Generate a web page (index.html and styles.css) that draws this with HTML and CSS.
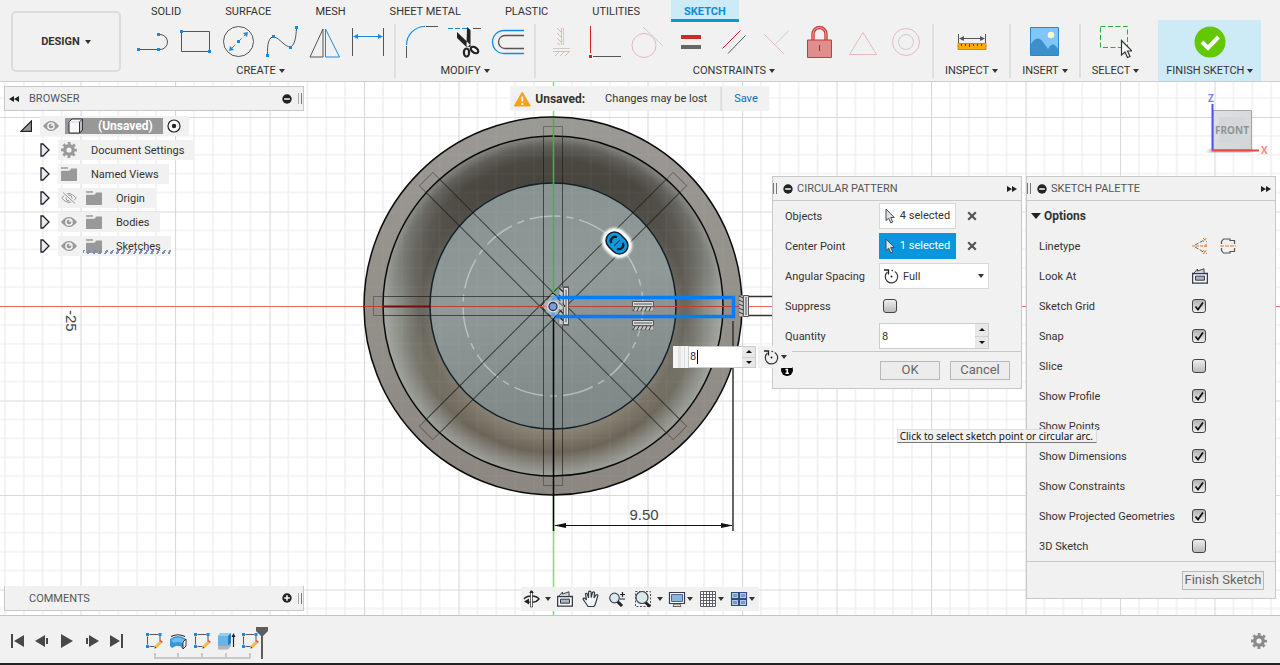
FILE: index.html
```html
<!DOCTYPE html>
<html lang="en">
<head>
<meta charset="utf-8">
<meta name="viewport" content="width=device-width, initial-scale=1">
<title>Sketch - (Unsaved)</title>
<link rel="stylesheet" href="styles.css">
</head>
<body>
<svg class="defs" aria-hidden="true">
  <symbol id="eye" viewBox="0 0 16 12"><path d="M0 6Q8-4 16 6Q8 16 0 6Z" fill="#999"/><circle cx="8" cy="6" r="3.1" fill="#999" stroke="#f0f0f0" stroke-width="1.500"/><circle cx="9" cy="5" r="1" fill="#f0f0f0"/></symbol>
  <symbol id="eye-off" viewBox="0 0 16 12"><path d="M.7 6Q8-3 15.300 6Q8 15 .7 6Z" fill="none" stroke="#999"/><circle cx="8" cy="6" r="3" fill="none" stroke="#999"/><path d="M2 .5l12 11" stroke="#f0f0f0" stroke-width="3"/><path d="M2 .5l12 11" stroke="#999"/></symbol>
  <symbol id="folder" viewBox="0 0 16 14"><path d="M0 3h8l2-1.500h6V14H0z" fill="#999"/><path d="M0 1h7" stroke="#999" stroke-width="1.500"/><path d="M0 3.500h8.500l1.500-1.500" stroke="#ddd" fill="none"/></symbol>
  <symbol id="gear" viewBox="0 0 16 16"><circle cx="8" cy="8" r="4.300" fill="none" stroke="currentColor" stroke-width="3.400"/><circle cx="8" cy="8" r="6.700" fill="none" stroke="currentColor" stroke-width="2.600" stroke-dasharray="2.800 2.462" stroke-dashoffset="1.400"/></symbol>
  <symbol id="twisty" viewBox="0 0 10 14"><path d="M1 1H3L9 7L3 13H1Z" fill="#e8ebf2" stroke="#222" stroke-width="1.300"/></symbol>
  <symbol id="minus" viewBox="0 0 10 10"><circle cx="5" cy="5" r="4.700" fill="#222"/><path d="M2.200 5h5.600" stroke="#fff" stroke-width="1.500"/></symbol>
  <symbol id="plus" viewBox="0 0 10 10"><circle cx="5" cy="5" r="4.700" fill="#222"/><path d="M2.200 5h5.600M5 2.200v5.600" stroke="#fff" stroke-width="1.500"/></symbol>
  <symbol id="ffwd" viewBox="0 0 10 6"><path d="M0 0L5 3L0 6ZM5 0L10 3L5 6Z" fill="#222"/></symbol>
  <symbol id="rewind" viewBox="0 0 10 6"><path d="M10 0L5 3L10 6ZM5 0L0 3L5 6Z" fill="#222"/></symbol>
  <symbol id="cursor" viewBox="0 0 10 16"><path d="M1 1V12.500L3.700 10.200L5.800 15L7.800 14L5.700 9.500H9.300Z" fill="#dfe3e8" stroke="#444b55"/></symbol>
  <symbol id="cross" viewBox="0 0 10 10"><path d="M1.200 1.200l7.600 7.600M8.800 1.200L1.200 8.800" stroke="#555" stroke-width="2.200"/></symbol>
  <symbol id="turn" viewBox="0 0 16 16"><path d="M4.500 4A6.200 6.200 0 1 0 11.800 3.500" fill="none" stroke="#333" stroke-width="1.200"/><path d="M10 2.700L8.500 2.400" stroke="#333" stroke-width="1.200"/><path d="M1 2H5.500V6.500" fill="none" stroke="#222" stroke-width="1.300"/><circle cx="8.500" cy="8.500" r="1" fill="#222"/></symbol>
  <symbol id="lookat" viewBox="1 1 16 16"><path d="M1.600 6.500h14.800v9.700h-14.800z" fill="#f7f8fa" stroke="#333b48" stroke-width="1.300"/><path d="M4.500 9.200h9v4h-9z" fill="#aab4c6" stroke="#333b48"/><path d="M3 6L6.500 2V4L13 1.800V6" fill="#ccd3de" stroke="#444"/></symbol>
  <symbol id="sketch-item" viewBox="0 0 18 18"><path d="M4.500 2.500h8.500M2.500 4.500v8M15 4v6M4.500 14.500h5" stroke="#555" fill="none"/><g fill="#178ae6"><path d="M1 1h3v3H1zM13.500 1h3v3h-3zM1 13h3v3H1z"/></g><path d="M9.500 16.500l.8-3.200 4.500-4.200 2 2-4.300 4.300z" fill="#f6b94d"/><path d="M9.500 16.500l.5-2 1.500 1.400z" fill="#333"/><path d="M14.800 9.100l1-1 2 2-1 1z" fill="#e04a3a"/></symbol>
</svg>

<header class="toolbar">
  <button class="workspace" type="button">DESIGN<span class="caret"></span></button>
  <div class="ribbon">
    <nav class="tabs" aria-label="Toolbar tabs">
      <a href="#solid">SOLID</a><a href="#surface">SURFACE</a><a href="#mesh">MESH</a><a href="#sheet">SHEET METAL</a><a href="#plastic">PLASTIC</a><a href="#utilities">UTILITIES</a><a class="active" href="#sketch" aria-current="page">SKETCH</a>
    </nav>
    <div class="groups">
      <section class="group">
        <div class="tools">
          <button type="button" aria-label="Line"><svg viewBox="136 26 34 34"><path d="M139 50.500H158M160 35.500A7.500 7.500 0 0 1 160 50.500" fill="none" stroke="#555"/><path d="M137 49h3v3h-3zM157 49h3v3h-3zM157 34h3v3h-3z" fill="#178ae6"/></svg></button>
          <button type="button" aria-label="Rectangle"><svg viewBox="179 26 34 34"><path d="M181.500 32.500h28v20h-28z" fill="none" stroke="#555"/><path d="M180 31h3v3h-3zM208 51h3v3h-3z" fill="#178ae6"/></svg></button>
          <button type="button" aria-label="Circle"><svg viewBox="222 26 34 34"><circle cx="238.500" cy="42.500" r="15" fill="none" stroke="#555"/><path d="M231 50l15.500-15.500" stroke="#178ae6" stroke-dasharray="6 3"/><path d="M248 33l-1 5-4-4zM229 52l1-5 4 4zM237 41h3v3h-3z" fill="#178ae6"/></svg></button>
          <button type="button" aria-label="Spline"><svg viewBox="265 26 34 34"><path d="M267.500 57C267 45 269 37 274 38C280 39 284 48 291 48C295 45 296 38 296.500 29" fill="none" stroke="#555"/><path d="M266 55h3v3h-3zM272 36h3v3h-3zM289 47h3v3h-3zM295 27h3v3h-3z" fill="#178ae6"/></svg></button>
          <button type="button" aria-label="Mirror"><svg viewBox="308 26 34 34"><path d="M323 30v28h-13z" fill="none" stroke="#555"/><path d="M325.500 30v28h14z" fill="none" stroke="#178ae6"/></svg></button>
          <button type="button" aria-label="Sketch Dimension"><svg viewBox="351 26 34 34"><path d="M352.500 29v28M383.500 29v28" stroke="#555"/><path d="M355 37.500h26" stroke="#178ae6"/><path d="M353 37.500l5-2.500v5zM383 37.500l-5-2.500v5z" fill="#178ae6"/></svg></button>
        </div>
        <button class="group-label" type="button">CREATE<span class="caret"></span></button>
      </section>
      <section class="group">
        <div class="tools">
          <button type="button" aria-label="Fillet"><svg viewBox="405 26 34 34"><path d="M406.500 46A18.500 18.500 0 0 1 425 27.500" fill="none" stroke="#178ae6" stroke-width="1.200"/><path d="M406.500 47v12M426 27.500h12" stroke="#555"/></svg></button>
          <button type="button" aria-label="Trim"><svg viewBox="448 26 34 34"><path d="M448 29.500h19" stroke="#178ae6" stroke-dasharray="5 2"/><path d="M473 29.500h8" stroke="#555"/><path d="M467 28l3.500 3V48l-4-.5zM457 33v6l10 9.500 3-3z" fill="#222"/><ellipse cx="466.500" cy="53.500" rx="2.600" ry="4" fill="none" stroke="#222" stroke-width="2.200"/><ellipse cx="474.500" cy="51" rx="4.200" ry="2.600" transform="rotate(35 474.500 51)" fill="none" stroke="#222" stroke-width="2.200"/></svg></button>
          <button type="button" aria-label="Offset"><svg viewBox="491 26 34 34"><path d="M524 31.500H504A11.500 11.500 0 0 0 504 54.500H524" fill="none" stroke="#178ae6" stroke-width="1.300"/><path d="M524 36.500H505A6.500 6.500 0 0 0 505 49.500H524" fill="none" stroke="#555" stroke-width="1.300"/></svg></button>
        </div>
        <button class="group-label" type="button">MODIFY<span class="caret"></span></button>
      </section>
      <section class="group">
        <div class="tools">
          <button type="button" aria-label="Horizontal/Vertical"><svg viewBox="545 26 34 34"><g fill="none" stroke="#eab5b5"><path d="M561.500 29v17M557 29l4 4M557 34l4 4M557 39l4 4M557 44l3 2M553 52.500h17M559 53l-4 4M564 53l-4 4M569 53l-4 4"/><path d="M563.500 29v17M553 49.500h17" stroke="#ccc"/></g></svg></button>
          <button type="button" aria-label="Coincident"><svg viewBox="588 26 34 34"><path d="M590.500 27v27" stroke="#d02020"/><path d="M593 57.500h28" stroke="#555"/><path d="M589 56h3v3h-3z" fill="#d02020"/></svg></button>
          <button type="button" aria-label="Tangent"><svg viewBox="631 26 34 34"><circle cx="644" cy="46.500" r="12" fill="none" stroke="#e9b8b8"/><path d="M643 28l20 19" stroke="#ccc"/></svg></button>
          <button type="button" aria-label="Equal"><svg viewBox="674 26 34 34"><path d="M681 36h20v4h-20z" fill="#d02727"/><path d="M681 46h20v4h-20z" fill="#666"/></svg></button>
          <button type="button" aria-label="Parallel"><svg viewBox="717 26 34 34"><path d="M722.500 49.500l18-18" stroke="#d02020"/><path d="M728 54.500l17.500-18" stroke="#555"/></svg></button>
          <button type="button" aria-label="Perpendicular"><svg viewBox="760 26 34 34"><path d="M764 35l20 20" stroke="#e9b8b8"/><path d="M775 45.500l14-14" stroke="#ccc"/></svg></button>
          <button type="button" aria-label="Fix/Unfix"><svg viewBox="803 26 34 34"><path d="M813 41v-6a6.500 6.500 0 0 1 13 0v6" fill="none" stroke="#cf4444" stroke-width="3.500"/><path d="M813 41v-6a6.500 6.500 0 0 1 13 0v6" fill="none" stroke="#e8a0a0" stroke-width="1"/><path d="M807.500 41h24v17.500h-24z" fill="#e08d8d" stroke="#cc3838"/><path d="M819.500 46v6" stroke="#b52020"/></svg></button>
          <button type="button" aria-label="Midpoint"><svg viewBox="846 26 34 34"><path d="M863 33.500l13.500 22h-27z" fill="none" stroke="#e9b8b8"/></svg></button>
          <button type="button" aria-label="Concentric"><svg viewBox="889 26 34 34"><circle cx="906" cy="43" r="13.500" fill="none" stroke="#e9b8b8"/><circle cx="906" cy="43" r="7.500" fill="none" stroke="#ccc"/></svg></button>
        </div>
        <button class="group-label" type="button">CONSTRAINTS<span class="caret"></span></button>
      </section>
      <section class="group single">
        <div class="tools"><button type="button" aria-label="Measure"><svg viewBox="955 26 34 34"><path d="M958 44.500h28v6h-28z" fill="#ffab10" stroke="#d98600"/><path d="M961.500 45v2M965.500 45v2M969.500 45v3M973.500 45v2M977.500 45v2M981.500 45v2" stroke="#444"/><path d="M958.500 35v9M985.500 35v9M960 39.500h24" stroke="#555"/><path d="M959 39.500l5-2.500v5zM985 39.500l-5-2.500v5z" fill="#555"/></svg></button></div>
        <button class="group-label" type="button">INSPECT<span class="caret"></span></button>
      </section>
      <section class="group single">
        <div class="tools"><button type="button" aria-label="Insert image"><svg viewBox="1029 26 34 34"><path d="M1031.500 28.500h28v28h-28z" fill="#80c6fa" stroke="#2f86c4"/><path d="M1032 56V45C1036 38 1041 38 1044 43L1049 50C1052 44 1056 44 1059 50V56Z" fill="#3e90cb"/><circle cx="1052" cy="36" r="3.300" fill="#fdfbd0"/></svg></button></div>
        <button class="group-label" type="button">INSERT<span class="caret"></span></button>
      </section>
      <section class="group single last">
        <div class="tools"><button type="button" aria-label="Select"><svg viewBox="1100 26 34 34"><path d="M1102.500 27.500h27v21h-27z" fill="none" stroke="#1eb04c" stroke-dasharray="5 2.500"/><path d="M1123.500 41.500v14.500l3.500-3 2.500 5.500 2.500-1-2.500-5.500h4.500z" fill="#fff" stroke="#333" stroke-width="1.200"/></svg></button></div>
        <button class="group-label" type="button">SELECT<span class="caret"></span></button>
      </section>
      <section class="group finish">
        <div class="tools"><button type="button" aria-label="Finish"><svg viewBox="1192 26 34 34"><circle cx="1209" cy="43" r="15.500" fill="#63c800"/><path d="M1201 43l6 6 10.500-11" fill="none" stroke="#fff" stroke-width="4"/></svg></button></div>
        <button class="group-label" type="button">FINISH SKETCH<span class="caret"></span></button>
      </section>
    </div>
  </div>
</header>

<main class="viewport">
  <svg class="scene" viewBox="0 82 1280 533" preserveAspectRatio="xMidYMid slice" role="img" aria-label="Circular pattern preview on a round bowl">
    <defs>
      <pattern id="grid" x="80.500" y="22.500" width="94.500" height="94.500" patternUnits="userSpaceOnUse">
        <path d="M18.900 0V94.500M37.800 0V94.500M56.700 0V94.500M75.600 0V94.500M0 18.900H94.500M0 37.800H94.500M0 56.700H94.500M0 75.600H94.500" stroke="#ebebeb" stroke-width="1.200"/>
        <path d="M.5 0V94.500M0 .5H94.500" stroke="#d9d9d9" stroke-width="1.200"/>
      </pattern>
      <linearGradient id="rim" x1="0" y1="0" x2="0" y2="1"><stop offset="0" stop-color="#9b9994"/><stop offset="1" stop-color="#8c8780"/></linearGradient>
      <radialGradient id="wall" gradientUnits="userSpaceOnUse" cx="553" cy="306" r="170"><stop offset=".7" stop-color="#938b7e"/><stop offset=".78" stop-color="#807869"/><stop offset=".86" stop-color="#6b6458"/><stop offset=".94" stop-color="#8a8981"/><stop offset="1" stop-color="#9da19a"/></radialGradient>
      <radialGradient id="sides" gradientUnits="userSpaceOnUse" cx="553" cy="306" r="170"><stop offset=".7" stop-color="#77746b"/><stop offset=".78" stop-color="#68655c"/><stop offset=".88" stop-color="#858880"/><stop offset="1" stop-color="#a5aaa4"/></radialGradient>
      <radialGradient id="shade" gradientUnits="userSpaceOnUse" cx="553" cy="306" r="170"><stop offset=".7" stop-color="#48443e"/><stop offset=".86" stop-color="#4b4741"/><stop offset=".94" stop-color="#5f5e58"/><stop offset="1" stop-color="#85867f"/></radialGradient>
      <linearGradient id="fadeTop" gradientUnits="userSpaceOnUse" x1="0" y1="136" x2="0" y2="306"><stop offset=".3" stop-color="#fff"/><stop offset=".55" stop-color="#aaa"/><stop offset=".8" stop-color="#555"/><stop offset="1" stop-color="#000"/></linearGradient>
      <linearGradient id="fadeSide" gradientUnits="userSpaceOnUse" x1="0" y1="206" x2="0" y2="430"><stop offset="0" stop-color="#fff"/><stop offset=".5" stop-color="#fff"/><stop offset="1" stop-color="#000"/></linearGradient>
      <mask id="topMask"><path d="M380 130h350v350H380z" fill="url(#fadeTop)"/></mask>
      <mask id="sideMask"><path d="M380 130h350v350H380z" fill="url(#fadeSide)"/></mask>
      <linearGradient id="floor" x1="0" y1="0" x2=".2" y2="1"><stop offset="0" stop-color="#879290"/><stop offset=".5" stop-color="#8f9997"/><stop offset="1" stop-color="#7f8987"/></linearGradient>
      <clipPath id="inside"><circle cx="553" cy="306" r="170"/></clipPath>
      <clipPath id="body"><circle cx="553" cy="306" r="189"/></clipPath>
      <filter id="glow" x="-50%" y="-50%" width="200%" height="200%"><feGaussianBlur stdDeviation="1"/></filter>
      <g id="arms"><path d="M543.500 126.500h19v359h-19z"/><path d="M543.500 126.500h19v359h-19z" transform="rotate(45 553 306)"/><path d="M543.500 126.500h19v359h-19z" transform="rotate(-45 553 306)"/><path d="M553 296.500H373.500v19H553"/></g>
      <g id="lock"><path d="M-10.500-5.500h21v5h-21z" fill="#ddd" stroke="#555"/><path d="M-9-3h18" stroke="#555"/><path d="M-10.500 0h21v4h-21z" fill="#c3c8c6" stroke="#777" stroke-width=".6"/><path d="M-8 0l-2 4M-4 0l-2 4M0 0l-2 4M4 0l-2 4M8 0l-2 4" stroke="#333"/></g>
    </defs>
    <path d="M0 82h1280v533H0z" fill="#fff"/>
    <path d="M0 82h1280v533H0z" fill="url(#grid)"/>
    <path d="M0 306.500h1280" stroke="#e56b6b"/>
    <path d="M553.500 82v533" stroke="#6bea6b" stroke-width="1.500"/>
    <circle cx="553" cy="306" r="189" fill="url(#rim)"/>
    <circle cx="553" cy="306" r="170" fill="url(#wall)"/>
    <circle cx="553" cy="306" r="170" fill="url(#sides)" mask="url(#sideMask)"/>
    <circle cx="553" cy="306" r="170" fill="url(#shade)" mask="url(#topMask)"/>
    <circle cx="553" cy="306" r="123" fill="url(#floor)"/>
    <g clip-path="url(#body)"><path d="M360 110h390v390H360z" fill="url(#grid)" opacity=".05"/></g>
    <g fill="none" stroke="#0b0b0b" stroke-width="1.500"><circle cx="553" cy="306" r="189"/><circle cx="553" cy="306" r="170"/><circle cx="553" cy="306" r="123" stroke="#13232b"/></g>
    <circle cx="553" cy="306" r="90" fill="none" stroke="#fff" stroke-opacity=".4" stroke-width="1.500" stroke-dasharray="31 6 7 6"/>
    <use href="#arms" fill="none" stroke="#222" stroke-opacity=".4"/>
    <g clip-path="url(#inside)"><use href="#arms" fill="none" stroke="#111" stroke-opacity=".4"/></g>
    <path d="M364 306.500h378" stroke="#c23b3b"/>
    <path d="M383 306.500h48" stroke="#780b10" stroke-width="2"/>
    <path d="M553.500 118v188" stroke="#2cc42c" stroke-width="1.500"/>
    <path d="M553.500 316v215" stroke="#000" stroke-width="1.500"/>
    <path d="M742 296.500h40M742 315.500h40" stroke="#333" stroke-width="1.500"/>
    <path d="M733 321v210" stroke="#333" stroke-width="1.500"/>
    <path d="M555 525.500h177" stroke="#111"/>
    <path d="M554 525.500l12-2.500v5zM733 525.500l-12-2.500v5z" fill="#111"/>
    <use href="#lock" transform="translate(563 306) rotate(90) scale(1.800 1)"/>
    <use href="#lock" transform="translate(643 307)"/>
    <use href="#lock" transform="translate(643 326)"/>
    <use href="#lock" transform="translate(743 306) rotate(90)"/>
    <path d="M553 297.500H733.500V316.500H553" fill="none" stroke="#087cf8" stroke-width="3.500"/>
    <path d="M541 306l12-13 12 13-12 13z" fill="#d8dee0" fill-opacity=".4" stroke="#222" stroke-dasharray="5 3"/>
    <path d="M553 298v18" stroke="#50a0f4" stroke-width="3"/>
    <circle cx="553" cy="306.500" r="6" fill="#ddd"/>
    <circle cx="553" cy="306.500" r="4" fill="#7f9ddd" stroke="#25334a" stroke-width="1.300"/>
    <g transform="translate(617 243) rotate(45)"><rect x="-16" y="-13" width="32" height="26" rx="13" fill="#fff" filter="url(#glow)"/><rect x="-12" y="-8.500" width="24" height="17" rx="8.500" fill="#0f9ade" stroke="#14232d" stroke-width="1.600"/><path d="M-4-4C-8-3-8 3-4 4M4-4C8-3 8 3 4 4" fill="none" stroke="#0d2330" stroke-width="2.400"/><path d="M0-4v8" stroke="#063c5a"/></g>
    <g class="scene-text"><text x="644" y="520" text-anchor="middle">9.50</text><text transform="translate(66 310) rotate(90)">-25</text></g>
  </svg>

  <aside class="browser">
    <div class="bar"><button type="button" aria-label="Collapse"><svg class="i10x6"><use href="#rewind"/></svg></button><h2>BROWSER</h2><button type="button" aria-label="Hide"><svg class="i10"><use href="#minus"/></svg></button><span class="grip"></span></div>
    <ul class="tree">
      <li class="root"><button type="button" aria-label="Collapse"><svg width="12" height="12" viewBox="0 0 12 12"><path d="M11.400 1v10.400H1z" fill="#999" stroke="#222" stroke-width="1.200"/></svg></button>
        <div class="node"><svg class="i-eye"><use href="#eye"/></svg><span class="name"><svg width="16" height="16" viewBox="0 0 16 16"><path d="M1 4L4 1H14.500V12L11.500 15H1Z" fill="#f5f7fa" stroke="#333"/><path d="M1.500 4H11.500V15" fill="none" stroke="#cfd6de"/><path d="M11.500 4L14.500 1V12L11.500 15Z" fill="#b9c0c9" stroke="#333"/></svg>(Unsaved)</span><svg width="14" height="14" viewBox="0 0 14 14"><circle cx="7" cy="7" r="6" fill="#fff" stroke="#222" stroke-width="1.200"/><circle cx="7" cy="7" r="2.200" fill="#222"/></svg></div></li>
      <li><button type="button" aria-label="Expand"><svg class="i-tw"><use href="#twisty"/></svg></button><div class="node"><svg class="i16 grey"><use href="#gear"/></svg><span class="label">Document Settings</span></div></li>
      <li><button type="button" aria-label="Expand"><svg class="i-tw"><use href="#twisty"/></svg></button><div class="node"><svg class="i-fold"><use href="#folder"/></svg><span class="label">Named Views</span></div></li>
      <li><button type="button" aria-label="Expand"><svg class="i-tw"><use href="#twisty"/></svg></button><div class="node"><svg class="i-eye"><use href="#eye-off"/></svg><svg class="i-fold"><use href="#folder"/></svg><span class="label">Origin</span></div></li>
      <li><button type="button" aria-label="Expand"><svg class="i-tw"><use href="#twisty"/></svg></button><div class="node"><svg class="i-eye"><use href="#eye"/></svg><svg class="i-fold"><use href="#folder"/></svg><span class="label">Bodies</span></div></li>
      <li><button type="button" aria-label="Expand"><svg class="i-tw"><use href="#twisty"/></svg></button><div class="node editing"><svg class="i-eye"><use href="#eye"/></svg><svg class="i-fold"><use href="#folder"/></svg><span class="label">Sketches</span></div></li>
    </ul>
  </aside>

  <div class="notice"><svg width="18" height="16" viewBox="0 0 18 16"><path d="M9 1L17 15H1Z" fill="#fba01c" stroke="#fba01c" stroke-linejoin="round"/><path d="M9 5.500v5M9 12v2" stroke="#fff" stroke-width="1.800"/></svg><strong>Unsaved:</strong><span>Changes may be lost</span><a href="#save">Save</a></div>

  <svg class="viewcube" viewBox="1200 90 72 68" role="img" aria-label="View cube, front">
    <defs><linearGradient id="face" x1="0" y1="0" x2="1" y2="1"><stop offset="0" stop-color="#dfe1e3"/><stop offset="1" stop-color="#d2d3d4"/></linearGradient><filter id="soft"><feGaussianBlur stdDeviation="1.500"/></filter></defs>
    <path d="M1206 152h44l3-3h-40z" fill="#999" filter="url(#soft)"/>
    <path d="M1213 110.500h38.500v39H1213z" fill="url(#face)" stroke="#a5a5a5"/>
    <path d="M1219 117h26v26h-26z" fill="#d3d7da"/>
    <path d="M1212.500 104v47" stroke="#5050f0" stroke-width="2"/><path d="M1212 150.500h47" stroke="#f04444" stroke-width="2"/>
    <text x="1232" y="134" text-anchor="middle" class="face">FRONT</text><text x="1208" y="102" class="axis z">Z</text><text x="1261" y="154" class="axis x">X</text>
  </svg>

  <form class="panel pattern" onsubmit="return false">
    <div class="panel-head"><span class="grip"></span><svg class="i10"><use href="#minus"/></svg><h2>CIRCULAR PATTERN</h2><svg class="i10x6"><use href="#ffwd"/></svg></div>
    <div class="fields">
      <div class="field"><span class="lbl">Objects</span><button class="pick" type="button"><svg class="i-cur"><use href="#cursor"/></svg>4 selected</button><button class="clear" type="button" aria-label="Clear objects"><svg class="i10"><use href="#cross"/></svg></button></div>
      <div class="field"><span class="lbl">Center Point</span><button class="pick on" type="button"><svg class="i-cur"><use href="#cursor"/></svg>1 selected</button><button class="clear" type="button" aria-label="Clear center point"><svg class="i10"><use href="#cross"/></svg></button></div>
      <div class="field"><label class="lbl" for="spacing">Angular Spacing</label><span class="combo"><svg class="i16"><use href="#turn"/></svg><select id="spacing"><option>Full</option><option>Angle</option></select><span class="caret"></span></span></div>
      <div class="field"><label class="lbl" for="suppress">Suppress</label><input class="check indent" id="suppress" type="checkbox"></div>
      <div class="field"><label class="lbl" for="qty">Quantity</label><span class="number"><input id="qty" type="text" inputmode="numeric" value="8"><span class="spin"><button type="button" aria-label="Increase"></button><button type="button" aria-label="Decrease"></button></span></span></div>
    </div>
    <div class="panel-foot"><svg class="info" viewBox="0 0 12 12"><circle cx="6" cy="6" r="6" fill="#000"/><path d="M6 2v2M4.500 5.500H6.300V9M4.500 9.200h3.300" stroke="#fff" stroke-width="1.500" fill="none"/></svg><button class="btn" type="button">OK</button><button class="btn" type="button">Cancel</button></div>
  </form>

  <form class="panel palette" onsubmit="return false">
    <div class="panel-head"><span class="grip"></span><svg class="i10"><use href="#minus"/></svg><h2>SKETCH PALETTE</h2><svg class="i10x6"><use href="#ffwd"/></svg></div>
    <div class="fields">
      <h3 class="field"><span class="fold"></span>Options</h3>
      <div class="field"><span class="lbl">Linetype</span><button type="button" aria-label="Construction"><svg class="i16" viewBox="0 0 16 16"><path d="M3 7L13 1.500M3 9L13 15" stroke="#666" stroke-dasharray="4 1.500"/><path d="M0 8h16M11 0l4 4M14.500 0L11 4M14 6v4M11 12l4 4M14.500 12L11 16" stroke="#e8792b" stroke-dasharray="3 1"/></svg></button><button class="second" type="button" aria-label="Centerline"><svg class="i16" viewBox="0 0 16 16"><path d="M1.500 6V3.500L3.500 1H10V2.500H14.500V6M1.500 10V12.500L3.500 15H10V13.500H14.500V10" fill="none" stroke="#555" stroke-width="1.200"/><path d="M0 8h16" stroke="#e8792b" stroke-width="1.200" stroke-dasharray="4 1"/></svg></button></div>
      <div class="field"><span class="lbl">Look At</span><button type="button" aria-label="Look At"><svg class="i16"><use href="#lookat"/></svg></button></div>
      <div class="field"><label class="lbl" for="o1">Sketch Grid</label><input class="check" id="o1" type="checkbox" checked></div>
      <div class="field"><label class="lbl" for="o2">Snap</label><input class="check" id="o2" type="checkbox" checked></div>
      <div class="field"><label class="lbl" for="o3">Slice</label><input class="check" id="o3" type="checkbox"></div>
      <div class="field"><label class="lbl" for="o4">Show Profile</label><input class="check" id="o4" type="checkbox" checked></div>
      <div class="field"><label class="lbl" for="o5">Show Points</label><input class="check" id="o5" type="checkbox" checked></div>
      <div class="field"><label class="lbl" for="o6">Show Dimensions</label><input class="check" id="o6" type="checkbox" checked></div>
      <div class="field"><label class="lbl" for="o7">Show Constraints</label><input class="check" id="o7" type="checkbox" checked></div>
      <div class="field"><label class="lbl" for="o8">Show Projected Geometries</label><input class="check" id="o8" type="checkbox" checked></div>
      <div class="field"><label class="lbl" for="o9">3D Sketch</label><input class="check" id="o9" type="checkbox"></div>
    </div>
    <div class="panel-foot"><button class="btn wide" type="button">Finish Sketch</button></div>
  </form>

  <div class="inline-edit"><span class="handle"></span><span class="number"><input type="text" inputmode="numeric" value="8" aria-label="Quantity"><i class="text-caret"></i><span class="spin"><button type="button" aria-label="Increase"></button><button type="button" aria-label="Decrease"></button></span></span><button class="turn" type="button" aria-label="Spacing type"><svg class="i16"><use href="#turn"/></svg><span class="caret"></span></button></div>
  <div class="tooltip" role="tooltip">Click to select sketch point or circular arc.</div>

  <div class="bar comments"><h2>COMMENTS</h2><button type="button" aria-label="Add comment"><svg class="i10"><use href="#plus"/></svg></button><span class="grip"></span></div>

  <div class="navbar" role="toolbar" aria-label="Navigation">
    <button class="orbit" type="button" aria-label="Orbit"><svg width="17" height="18" viewBox="0 0 17 18"><path d="M1 9C4 5 13 5 16 9C13 13 6 13 3 11" fill="none" stroke="#222" stroke-width="1.300"/><path d="M7.500 1h2v16h-2z" fill="#fff" stroke="#444" stroke-width=".8"/><path d="M1 11.500l5-3v6zM6 3l2.500-2.500L11 3" fill="#222"/></svg><span class="caret"></span></button>
    <button type="button" aria-label="Look at"><svg width="18" height="18" viewBox="0 0 18 18"><use href="#lookat" x="1" y="1" width="16" height="16"/></svg></button>
    <button type="button" aria-label="Pan"><svg width="18" height="18" viewBox="0 0 18 18"><path d="M6 16.500C4 13 2 11 1 9C1.500 7.500 3 8 4.500 10L3.500 4C4.500 2.500 5.500 3 6.500 8L6.500 2C7.500 .5 8.800 1 9 2L9.200 7.500L10.500 2.500C11.500 1.500 13 2 12.500 3.500L12 8L14 5C15.500 4 16.500 5 15.500 7C14 11 14 14 12 16.500Z" fill="#f5f7fa" stroke="#333a44" stroke-width="1.200"/></svg></button>
    <button type="button" aria-label="Zoom"><svg width="18" height="18" viewBox="0 0 18 18"><path d="M9 11l5 5" stroke="#222" stroke-width="3"/><circle cx="6.500" cy="8" r="4.800" fill="#d8eaf0" stroke="#445" stroke-width="1.200"/><path d="M12 4.500h5M14.500 2v5M12 9h5" stroke="#222" stroke-width="1.200"/></svg></button>
    <button type="button" aria-label="Fit"><svg width="18" height="18" viewBox="0 0 18 18"><path d="M1.500 1.500h15v15h-15z" fill="none" stroke="#555" stroke-dasharray="2 1.500"/><path d="M11 12l5 4.500" stroke="#222" stroke-width="3"/><circle cx="8" cy="7.500" r="6" fill="#d8eaea" stroke="#445" stroke-width="1.200"/></svg><span class="caret"></span></button>
    <button class="tight" type="button" aria-label="Display settings"><svg width="18" height="18" viewBox="0 0 18 18"><path d="M1.500 2.500h15v11h-15z" fill="#fff" stroke="#333b48" stroke-width="1.200"/><path d="M3.500 4.500h11v7h-11z" fill="#8eb4e2" stroke="#47648e"/><path d="M6 14h6l1 2.500H5z" fill="#ddd" stroke="#444" stroke-width=".8"/></svg><span class="caret"></span></button>
    <button class="tight" type="button" aria-label="Grid and snaps"><svg width="18" height="18" viewBox="0 0 18 18"><path d="M1.500 1.500h15v15h-15zM4.500 1.500v15M7.500 1.500v15M10.500 1.500v15M13.500 1.500v15M1.500 4.500h15M1.500 7.500h15M1.500 10.500h15M1.500 13.500h15" fill="#fff" stroke="#5a5f68"/></svg><span class="caret"></span></button>
    <button class="tight" type="button" aria-label="Viewports"><svg width="18" height="18" viewBox="0 0 18 18"><path d="M1.500 2.500h7v6h-7zM9.500 2.500h7v6h-7zM1.500 9.500h7v6h-7zM9.500 9.500h7v6h-7z" fill="#b6cdee" stroke="#2f4a7c" stroke-width="1.100"/><path d="M3.500 4.500h3v2h-3zM11.500 4.500h3v2h-3zM3.500 11.500h3v2h-3zM11.500 11.500h3v2h-3z" fill="#7ea2d8" stroke="#5f82b8" stroke-width=".7"/></svg><span class="caret"></span></button>
  </div>
</main>

<footer class="timeline">
  <div class="playback">
    <button type="button" aria-label="Go to start"><svg viewBox="0 0 16 16"><path d="M2 1v14h2V1zM15 2v12L5 8z"/></svg></button>
    <button type="button" aria-label="Step back"><svg viewBox="0 0 16 16"><path d="M11 2v12L1 8zM12 5h2v6h-2z"/></svg></button>
    <button type="button" aria-label="Play"><svg viewBox="0 0 16 16"><path d="M2 1v14l12-7z"/></svg></button>
    <button type="button" aria-label="Step forward"><svg viewBox="0 0 16 16"><path d="M5 2v12l10-6zM2 5h2v6H2z"/></svg></button>
    <button type="button" aria-label="Go to end"><svg viewBox="0 0 16 16"><path d="M12 1v14h2V1zM1 2v12l10-6z"/></svg></button>
  </div>
  <div class="features">
    <button type="button" aria-label="Sketch1"><svg width="24" height="46" viewBox="0 0 24 46"><use href="#sketch-item" x="3" y="14" width="18" height="18"/><path class="track" d="M13 35v5H24"/></svg></button>
    <button type="button" aria-label="Revolve1"><svg width="24" height="46" viewBox="0 0 24 46"><path d="M4 21Q12 15 20 21V28L17 31L14 28H10L6 30L4 28Z" fill="#3a96d8"/><path d="M5 22Q12 17 19 22L16 25Q12 23 8 25Z" fill="#74bcf0"/><path d="M17 24l3-3v7l-3 3z" fill="#fff" stroke="#333"/><path d="M5 18.500Q12 15 19 18.500" fill="none" stroke="#333" stroke-width="1.200"/><path class="track" d="M0 40H24M12 35v5"/></svg></button>
    <button type="button" aria-label="Sketch2"><svg width="24" height="46" viewBox="0 0 24 46"><use href="#sketch-item" x="3" y="14" width="18" height="18"/><path class="track" d="M0 40H24M12 35v5"/></svg></button>
    <button type="button" aria-label="Extrude1"><svg width="24" height="46" viewBox="0 0 24 46"><path d="M4 28h10l3-3v3l-3 3.500H4z" fill="#b5b5b5"/><path d="M4 18l3-3h10v10l-3 3H4z" fill="#1f7fc4"/><path d="M4 18h10v10H4z" fill="#69b5ea"/><path d="M4 18l3-3h10l-3 3z" fill="#8fd0f8"/><path d="M19.500 17v12" stroke="#222" stroke-width="1.200"/><path d="M19.500 15l-2 4h4z" fill="#222"/><path class="track" d="M0 40H24M12 35v5"/></svg></button>
    <button type="button" aria-label="Sketch3, current"><svg width="36" height="46" viewBox="0 0 36 46"><use href="#sketch-item" x="3" y="14" width="18" height="18"/><path class="track" d="M0 40H12V35"/><path d="M18 9h12v4l-5 5V41h-2V18l-5-5z" fill="#5d5d5d"/></svg></button>
  </div>
  <button class="settings" type="button" aria-label="Timeline settings"><svg class="i16"><use href="#gear"/></svg></button>
</footer>
</body>
</html>
```
FILE: styles.css
```css
* { box-sizing: border-box; }
body {
  margin: 0;
  min-height: 100vh;
  display: flex;
  flex-direction: column;
  font: 11px/14px Roboto, "Liberation Sans", sans-serif;
  color: #333;
  background: #f1f1f1;
}
button, input, select { font: inherit; color: inherit; margin: 0; }
button { padding: 0; border: 0; background: none; display: flex; align-items: center; justify-content: center; white-space: nowrap; }
h2, h3, ul { margin: 0; padding: 0; font: inherit; list-style: none; }
a { color: inherit; text-decoration: none; }
svg { display: block; flex: none; }
.defs { position: absolute; width: 0; height: 0; }
.caret { flex: none; border: 3px solid transparent; border-top: 4px solid #333; border-bottom: 0; margin-left: 5px; }
.i10 { width: 10px; height: 10px; }
.i10x6 { width: 10px; height: 6px; }
.i16 { width: 16px; height: 16px; }
.i-eye { width: 16px; height: 12px; }
.i-fold { width: 16px; height: 14px; }
.i-tw { width: 10px; height: 14px; }
.i-cur { width: 10px; height: 16px; }
.grey { color: #999; }
.grip { width: 4px; height: 11px; border: solid #777; border-width: 0 1px; }

/* Toolbar */
.toolbar { display: flex; gap: 6px; height: 82px; border-bottom: 1px solid #ccc; }
.workspace { width: 110px; height: 61px; margin: 11px 0 0 11px; border: 2px solid #dcdcdc; border-radius: 5px; font-weight: 700; }
.ribbon { flex: 1; display: flex; flex-direction: column; min-width: 0; }
.tabs { display: flex; height: 24px; padding-left: 2px; }
.tabs a { margin: 0 9px; padding: 5px 13px 0; white-space: nowrap; }
.tabs .active { background: #cdeaf7; border-bottom: 3px solid #0a96dc; color: #0a8fd0; font-weight: 700; }
.groups { display: flex; flex: 1; }
.group { margin: 2px 0 3px; padding: 1px 9px 0; border-right: 2px solid #dfdfdf; display: flex; flex-direction: column; align-items: center; }
.tools { display: flex; gap: 9px; }
.tools svg { width: 34px; height: 34px; }
.group-label { margin-top: 5px; height: 14px; }
.group-label .caret { margin-left: 3px; }
.single { padding: 1px 11px 0; }
.last { border-right-color: transparent; }
.finish { margin: -2px 0 0 6px; padding: 5px 8px 0; background: #cdeaf7; border: 0; }

/* Canvas */
.viewport { position: relative; flex: 1; min-height: 533px; overflow: hidden; }
.scene { position: absolute; inset: 0; width: 100%; height: 100%; }
.scene-text { font: 15px "Liberation Sans", Arial, sans-serif; fill: #444; }
.bar { display: flex; align-items: center; height: 25px; padding: 0 1px 0 4px; width: 300px; background: #f1f1f1; border: 1px solid #c8c8c8; color: #555; }
.bar h2 { flex: 1; margin-left: 10px; }
.bar .grip { margin-left: 6px; border-left-color: #aaa; }
.browser { position: absolute; top: 4px; left: 4px; }
.tree { display: flex; flex-direction: column; gap: 4px; padding: 5px 0 0 36px; }
.tree li { display: flex; gap: 8px; }
.tree .root { margin-left: -20px; }
.node { position: relative; display: flex; align-items: center; height: 20px; padding: 0 10px 0 3px; background: #f1f1f1; }
.label { margin-left: 14px; padding-top: 2px; }
.i-eye + .i-fold { margin-left: 9px; }
.root .node { padding-right: 8px; }
.name { display: flex; align-items: center; gap: 14px; height: 16px; padding: 0 10px 0 3px; margin: 0 4px 0 6px; background: #989898; color: #fff; font-weight: 700; font-size: 12px; }
.editing::after { content: ""; position: absolute; left: 25px; right: 0; bottom: 2px; height: 4px; background: repeating-linear-gradient(120deg, #7e8db0 0 2px, transparent 2px 5px); }
.comments { position: absolute; left: 4px; bottom: 4px; border-top: 0; }
.comments h2 { margin-left: 20px; padding-top: 1px; }

.notice { position: absolute; top: 4px; left: 50%; transform: translateX(-50%); display: flex; align-items: center; height: 25px; padding-left: 3px; background: #f1f1f1; white-space: nowrap; }
.notice strong { margin: 0 20px 0 4px; font-size: 12px; }
.notice span { padding-right: 13px; }
.notice a { padding: 5px 12px; border-left: 2px solid #ddd; color: #0870b8; }
.viewcube { position: absolute; top: 8px; right: 8px; width: 72px; height: 68px; }
.face { font: 700 10px "Noto Sans", sans-serif; fill: #8f9499; }
.axis { font: 700 10px "Open Sans", sans-serif; }
.z { fill: #8080ff; }
.x { fill: #ff8585; }

/* Floating panels */
.panel { position: absolute; top: 94px; width: 250px; background: #f1f1f1; border: 1px solid #c8c8c8; }
.pattern { right: 258px; }
.palette { right: 4px; }
.panel-head { display: flex; align-items: center; height: 24px; padding: 0 4px 0 0; border-bottom: 1px solid #c8c8c8; color: #555; }
.panel-head .i10 { margin: 0 4px 0 6px; }
.panel-head h2 { flex: 1; }
.field { display: flex; align-items: center; height: 30px; }
.pattern .fields { padding-left: 12px; }
.lbl { padding-top: 2px; }
.pattern .lbl { width: 94px; }
.palette .fields { padding-left: 12px; }
.palette .lbl { width: 153px; }
.palette h3 { font-weight: 700; font-size: 12px; margin-left: -8px; }
.fold { border: 5px solid transparent; border-top: 6px solid #222; border-bottom: 0; margin-right: 3px; }
.second { margin-left: 12px; }
.pick { width: 77px; height: 26px; gap: 5px; background: #fff; border: 1px solid #d8d8d8; }
.pick.on { background: #0a96dc; border-color: #0a96dc; color: #fff; }
.clear { margin-left: 11px; }
.combo { display: flex; align-items: center; width: 110px; height: 26px; padding: 0 4px 0 3px; background: #fff; border: 1px solid #d8d8d8; }
.combo select { flex: 1; min-width: 0; appearance: none; border: 0; background: none; padding: 1px 0 0 4px; }
.number { display: flex; width: 110px; height: 26px; background: #fff; border: 1px solid #ccc; }
.number input { flex: 1; min-width: 0; border: 0; background: none; padding: 1px 2px 0; }
.spin { display: flex; flex-direction: column; width: 13px; background: #e8e8e8; }
.spin button { flex: 1; }
.spin button + button { border-top: 1px solid #d0d0d0; }
.spin button::before { content: ""; border: 3px solid transparent; border-bottom: 3px solid #111; border-top: 0; }
.spin button + button::before { border-top: 3px solid #111; border-bottom: 0; }
.check { appearance: none; width: 14px; height: 14px; border: 1px solid #444; border-radius: 3px; background: linear-gradient(#bbb, #f2f2f2); }
.check:not(:checked) { background: linear-gradient(#eee, #bbb); }
.check:checked { background: url("data:image/svg+xml,%3Csvg xmlns='http://www.w3.org/2000/svg' viewBox='0 0 12 12'%3E%3Cpath d='M2.500 6.500L5 9.500L10 2.500' fill='none' stroke='%23111' stroke-width='1.700'/%3E%3C/svg%3E"), linear-gradient(#b0b0b0, #eee); }
.indent { margin-left: 4px; }
.panel-foot { display: flex; align-items: center; justify-content: flex-end; gap: 10px; height: 37px; padding: 0 11px 0 8px; border-top: 1px solid #c8c8c8; }
.info { width: 12px; height: 12px; margin-right: auto; }
.btn { width: 60px; height: 19px; border: 1px solid #b8b8b8; background: #ececec; color: #666; font-size: 13px; }
.btn.wide { width: 82px; }

.inline-edit { position: absolute; left: calc(50% + 33px); top: 264px; display: flex; height: 22px; }
.handle { width: 15px; background: linear-gradient(90deg, #f4f4f4 5px, #e4e4e4 5px 8px, #f4f4f4 8px 11px, #ddd 11px 12px, #f4f4f4 12px); }
.inline-edit .number { position: relative; width: 68px; height: 22px; }
.inline-edit .number input { padding: 0 1px; }
.text-caret { position: absolute; left: 8px; top: 3px; width: 1px; height: 14px; background: #000; }
.turn { margin-left: 2px; padding: 0 5px; background: #f1f1f1; }
.turn .caret { margin-left: 2px; }
.tooltip { position: absolute; top: 347px; right: 183px; padding: 0 3px 0 2px; border: 1px solid #ddd; border-bottom-color: #777; background: #f1f1f1; color: #111; font: 10px/12px "Noto Sans", sans-serif; white-space: nowrap; }
.navbar { position: absolute; bottom: 4px; left: 50%; transform: translateX(-50%); display: flex; align-items: center; gap: 8px; height: 24px; padding: 0 4px 0 2px; background: #f1f1f1; }
.navbar .caret { margin-left: 5px; }
.navbar .orbit { margin-right: -3px; }
.navbar .tight { margin-left: -3px; }
.navbar .tight .caret { margin-left: 1px; }
.navbar .tight + .tight { margin-left: -2px; }

/* Timeline */
.timeline { display: flex; align-items: center; height: 50px; padding: 2px 13px 0 9px; border-top: 1px solid #c4c4c4; border-bottom: 2px solid #222; }
.playback { display: flex; gap: 9px; }
.playback svg { width: 16px; height: 16px; fill: #484848; }
.features { display: flex; margin-left: 17px; }
.track { fill: none; stroke: #c8c8c8; stroke-width: 2; }
.settings { margin-left: auto; color: #8a8a8a; }
```
